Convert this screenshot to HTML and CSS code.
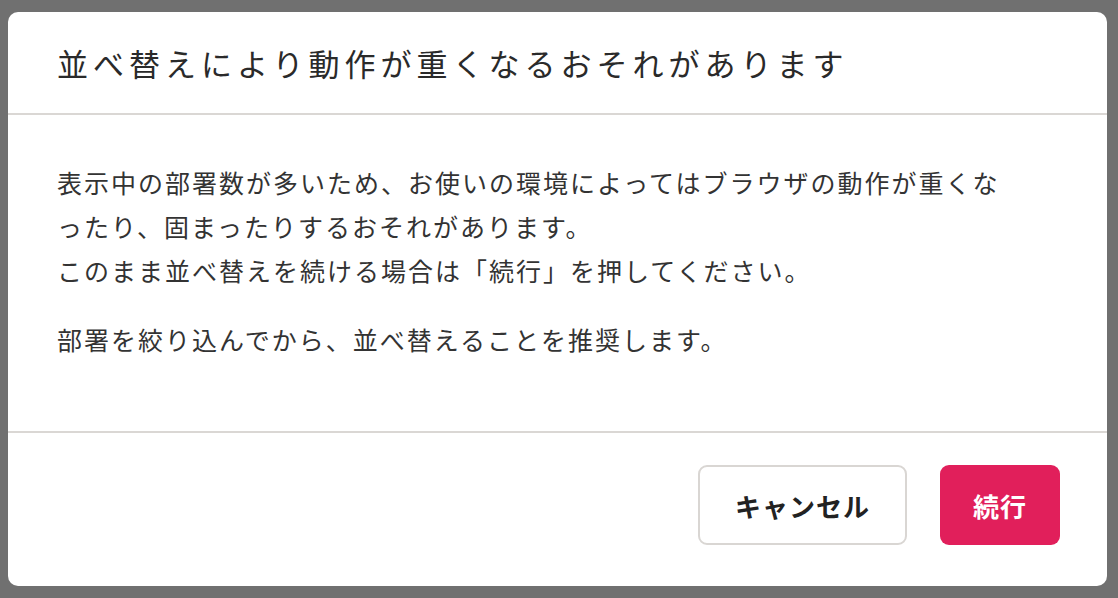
FILE: index.html
```html
<!DOCTYPE html>
<html lang="ja">
<head>
<meta charset="utf-8">
<title>並べ替えにより動作が重くなるおそれがあります</title>
<link rel="stylesheet" href="styles.css">
</head>
<body>
<div class="overlay">
  <div class="dialog" role="dialog">
    <div class="dialog-header">
      <h2 class="dialog-title">並べ替えにより動作が重くなるおそれがあります</h2>
    </div>
    <div class="dialog-body">
      <p class="text">表示中の部署数が多いため、お使いの環境によってはブラウザの動作が重くなったり、固まったりするおそれがあります。<br>このまま並べ替えを続ける場合は「続行」を押してください。</p>
      <p class="text">部署を絞り込んでから、並べ替えることを推奨します。</p>
    </div>
    <div class="dialog-footer">
      <button class="btn btn-secondary">キャンセル</button>
      <button class="btn btn-primary">続行</button>
    </div>
  </div>
</div>
</body>
</html>
```

FILE: styles.css
```css
html, body {
  margin: 0;
  padding: 0;
  height: 100%;
}
body {
  background: #707070;
  font-family: "Noto Sans CJK JP", "Noto Sans", sans-serif;
  color: #333333;
}
.overlay {
  padding: 12px 11px 0 8px;
}
.dialog {
  background: #ffffff;
  border-radius: 10px;
  height: 574px;
  display: flex;
  flex-direction: column;
  overflow: hidden;
}
.dialog-header {
  height: 101px;
  flex-shrink: 0;
  display: flex;
  align-items: center;
  padding: 0 49px;
  border-bottom: 2px solid #dad7d4;
}
.dialog-title {
  margin: 0;
  font-size: 31px;
  font-weight: 400;
  letter-spacing: 5px;
  color: #2a2a2a;
  line-height: 1;
}
.dialog-body {
  height: 318px;
  flex-shrink: 0;
  box-sizing: border-box;
  padding: 45px 49px 0;
  border-bottom: 2px solid #dad7d4;
}
.text {
  margin: 0 0 25px;
  max-width: 965px;
  font-size: 25px;
  letter-spacing: 2px;
  line-height: 44px;
  line-break: loose;
  color: #333333;
}
.dialog-footer {
  flex: 1;
  display: flex;
  justify-content: flex-end;
  align-items: flex-start;
  gap: 33px;
  padding: 32px 47px 0;
}
.btn {
  height: 80px;
  border-radius: 9px;
  font-family: inherit;
  font-size: 26px;
  font-weight: 700;
  letter-spacing: 1px;
  cursor: pointer;
}
.btn-secondary {
  background: #ffffff;
  border: 2px solid #d9d6d3;
  color: #222222;
  padding: 0 35px;
}
.btn-primary {
  background: #e11f5b;
  border: none;
  color: #ffffff;
  padding: 0 33px;
}
```
